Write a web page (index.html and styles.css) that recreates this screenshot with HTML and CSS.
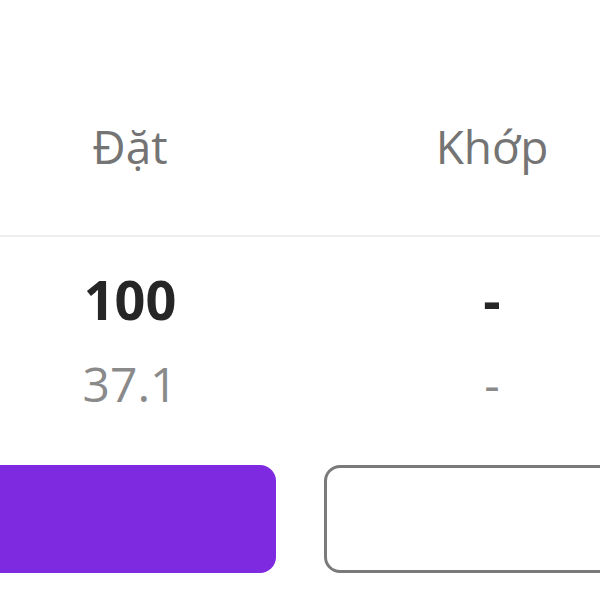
FILE: index.html
```html
<!DOCTYPE html>
<html lang="vi">
<head>
<meta charset="utf-8">
<title>Đặt / Khớp</title>
<link rel="stylesheet" href="styles.css">
</head>
<body>
<div class="page">
  <div class="header">
    <div class="cell head">Đặt</div>
    <div class="cell head">Khớp</div>
  </div>
  <div class="values">
    <div class="cell big">100</div>
    <div class="cell big">-</div>
    <div class="cell small">37.1</div>
    <div class="cell small">-</div>
  </div>
  <div class="actions">
    <button class="btn btn-primary" type="button"></button>
    <button class="btn btn-outline" type="button"></button>
  </div>
</div>
</body>
</html>
```

FILE: styles.css
```css
html, body {
  margin: 0;
  padding: 0;
  background: #ffffff;
}
body {
  width: 600px;
  height: 600px;
  overflow: hidden;
  font-family: "Open Sans", "Noto Sans", sans-serif;
}
.page {
  width: 600px;
  height: 600px;
  overflow: hidden;
}
.header,
.values {
  display: grid;
  grid-template-columns: 260px 216px;
  column-gap: 124px;
}
.header {
  padding: 116px 0 59px;
  border-bottom: 2px solid #eeeeee;
}
.cell {
  text-align: center;
  white-space: nowrap;
}
.head {
  font-size: 46px;
  line-height: 60px;
  color: #747474;
}
.values {
  padding-top: 30px;
  row-gap: 23px;
}
.big {
  font-size: 54px;
  line-height: 64px;
  font-weight: 700;
  color: #262626;
}
.small {
  font-size: 48px;
  line-height: 60px;
  color: #8a8a8a;
}
.actions {
  display: grid;
  grid-template-columns: 376px 376px;
  column-gap: 48px;
  margin: 51px -100px 0;
}
.btn {
  height: 108px;
  border-radius: 16px;
  padding: 0;
  font: inherit;
}
.btn-primary {
  background: #7e2ae0;
  border: none;
}
.btn-outline {
  background: #ffffff;
  border: 3px solid #7a7a7a;
}
```
